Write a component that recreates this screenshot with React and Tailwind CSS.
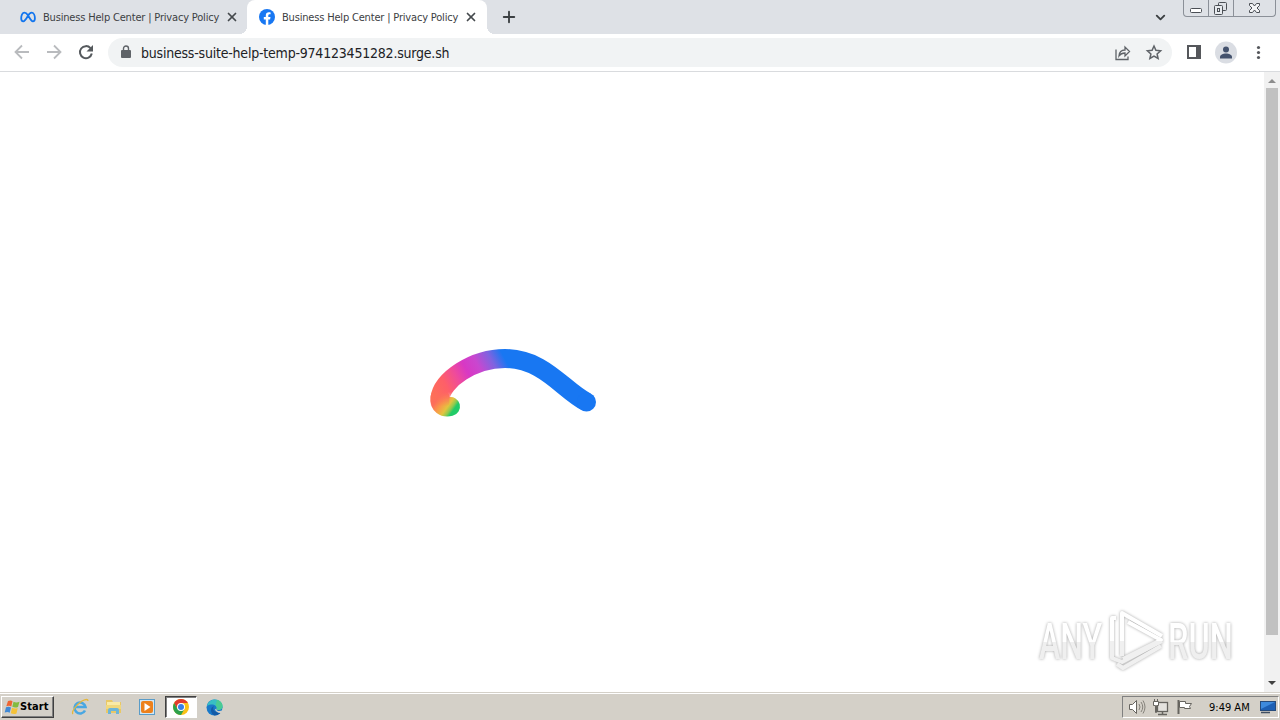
import { ChevronDown, Plus, X } from "lucide-react";

const TABS = [
  { id: 1, title: "Business Help Center | Privacy Policy", icon: "meta" },
  { id: 2, title: "Business Help Center | Privacy Policy", icon: "facebook" },
];

function MetaIcon() {
  return (
    <svg width="16" height="16" viewBox="0 0 16 16" fill="none">
      <path
        d="M8 6.2C6.7 4.3 5.5 3.6 4.4 3.6 2.4 3.6 1.2 6.5 1.2 9.2c0 2 .8 3.1 2.1 3.1 1.5 0 2.5-1.7 4.7-5.6 1.1-2 2.2-3.1 3.6-3.1 2 0 3.3 2.8 3.3 5.6 0 2-.7 3.1-2 3.1-1.5 0-2.4-1.5-4.9-6.1Z"
        stroke="#1275ee"
        strokeWidth="1.8"
      />
    </svg>
  );
}

function FacebookIcon() {
  return (
    <svg width="16" height="16" viewBox="0 0 16 16">
      <circle cx="8" cy="8" r="8" fill="#1877f2" />
      <path
        d="M6.8 16v-5.6H4.8V8.1h2V6.4c0-2 1.2-3.2 3-3.2.9 0 1.8.2 1.8.2v1.9h-1c-1 0-1.3.6-1.3 1.3v1.5h2.2l-.4 2.3H9.3V16Z"
        fill="#fff"
      />
    </svg>
  );
}

function Tab({ tab, active }) {
  return (
    <div
      className={
        active
          ? "relative flex h-[34px] w-[240px] items-center rounded-t-lg bg-white pl-3"
          : "flex h-[34px] w-[247px] items-center pl-5"
      }
    >
      {active && (
        <>
          <span className="absolute bottom-0 -left-2 size-2 bg-[radial-gradient(circle_at_0_0,transparent_8px,#fff_8px)]" />
          <span className="absolute -right-2 bottom-0 size-2 bg-[radial-gradient(circle_at_100%_0,transparent_8px,#fff_8px)]" />
        </>
      )}
      {tab.icon === "meta" ? <MetaIcon /> : <FacebookIcon />}
      <span className="ml-[7px] w-[182px] pt-[2px] whitespace-nowrap font-['DejaVu_Sans_Condensed','DejaVu_Sans',sans-serif] text-[11px] tracking-[-0.18px] text-[#3c4043]">
        {tab.title}
      </span>
      <X size={14} strokeWidth={3} className="text-[#45494d]" />
    </div>
  );
}

function WindowControls() {
  return (
    <div className="flex h-[17px] w-[93px] self-start rounded-b-[4px] border border-t-0 border-[#8b9098] text-[#4b4f55]">
      <div className="w-[25px] border-r border-[#8b9098]">
        <svg width="24" height="16" fill="none" stroke="currentColor">
          <rect x="6.5" y="8.5" width="11" height="4" rx="1" fill="#fff" />
        </svg>
      </div>
      <div className="w-[25px] border-r border-[#8b9098]">
        <svg width="24" height="16" fill="none" stroke="currentColor">
          <rect x="9.5" y="2.5" width="8" height="8" rx="1" />
          <rect x="5.5" y="5.5" width="8" height="9" rx="1" fill="#e7eaee" />
          <rect x="8.5" y="8.5" width="2" height="3" />
        </svg>
      </div>
      <svg width="41" height="16" fill="none" stroke="currentColor">
        <path d="M15.5 3.5h3l2 2.5 2-2.5h3v2l-2.5 2.5 2.5 2.5v2h-3l-2-2.5-2 2.5h-3v-2l2.5-2.5-2.5-2.5Z" fill="#f3f4f6" />
      </svg>
    </div>
  );
}

function TabStrip() {
  return (
    <div className="flex h-[34px] items-center bg-[#dee1e6]">
      {TABS.map((tab) => (
        <Tab key={tab.id} tab={tab} active={tab.id === 2} />
      ))}
      <Plus size={18} strokeWidth={2.5} className="ml-[13px] text-[#3c4043]" />
      <ChevronDown size={15} strokeWidth={3} className="mr-[15px] ml-auto text-[#3c4043]" />
      <WindowControls />
      <div className="w-1" />
    </div>
  );
}

function Toolbar() {
  return (
    <div className="flex h-[38px] items-center border-b border-[#d9dbde] bg-white">
      <svg width="108" height="37" fill="none" strokeWidth="1.8">
        <g stroke="#b9bbbe">
          <path d="M29 18H16M22 11.5 15.5 18l6.5 6.5" />
          <path d="M47 18h13M54 11.5l6.5 6.5-6.5 6.5" />
        </g>
        <path d="M90.5 14.2a6 6 0 1 0 1.3 5.3" stroke="#55595d" strokeWidth="2" />
        <path d="M93 11v6.5h-6.5Z" fill="#55595d" />
      </svg>
      <div className="flex h-[29px] w-[1064px] items-center rounded-full bg-[#f1f3f4] pr-[9px] pl-[13px]">
        <svg className="mb-px" width="10" height="14" fill="none">
          <rect y="5" width="10" height="8" rx="1" fill="#5f6368" />
          <path d="M2.5 5V3.5a2.5 2.5 0 0 1 5 0V5" stroke="#5f6368" strokeWidth="1.4" />
        </svg>
        <span className="ml-[10px] pt-[2px] whitespace-nowrap font-['DejaVu_Sans_Condensed','DejaVu_Sans',sans-serif] text-[14px] tracking-[-0.21px] text-[#202124]">
          business-suite-help-temp-974123451282.surge.sh
        </span>
        <svg className="ml-auto" width="50" height="18" fill="none" stroke="#5f6368" strokeWidth="1.3">
          <path d="M3 5.5v10h12v-3" />
          <path d="M6 12c.3-4 2.500-6 6-6V3l4.500 4.500-4.500 4.500V9c-3 0-4.500.8-6 3Z" />
          <path d="m41 2 1.900 4.300 4.700.5-3.500 3.100 1 4.600-4.100-2.400-4.100 2.400 1-4.600-3.500-3.100 4.700-.5Z" strokeWidth="1.500" />
        </svg>
      </div>
      <svg className="ml-[14px]" width="94" height="24">
        <path d="M1 4h14v14H1Zm2 2v10h7V6Z" fill="#55575b" fillRule="evenodd" />
        <circle cx="40" cy="11.500" r="11" fill="#dadde3" />
        <circle cx="40" cy="8.500" r="3" fill="#44526d" />
        <path d="M34 17.500V16c0-2 3-3.500 6-3.500s6 1.500 6 3.500v1.500Z" fill="#44526d" />
        <g fill="#55575b">
          <circle cx="72.500" cy="6.500" r="1.600" />
          <circle cx="72.500" cy="11.500" r="1.600" />
          <circle cx="72.500" cy="16.500" r="1.600" />
        </g>
      </svg>
    </div>
  );
}

// rainbow stroke of the loading animation
function Loader() {
  return (
    <svg width="170" height="72" viewBox="428 346 170 72" fill="none" strokeWidth="19">
      <defs>
        <linearGradient id="hook" gradientUnits="userSpaceOnUse" x1="436" y1="397" x2="454" y2="410">
          <stop offset=".1" stopColor="#fd6e5b" />
          <stop offset=".4" stopColor="#f99a48" />
          <stop offset=".68" stopColor="#e3c43f" />
          <stop offset=".85" stopColor="#8fca50" />
          <stop offset=".98" stopColor="#22cb67" />
        </linearGradient>
        <linearGradient id="arc" gradientUnits="userSpaceOnUse" x1="436" y1="402" x2="510" y2="363">
          <stop offset="0" stopColor="#fd7057" />
          <stop offset=".2" stopColor="#fe5f69" />
          <stop offset=".36" stopColor="#ef4b9b" />
          <stop offset=".5" stopColor="#d838c4" />
          <stop offset=".65" stopColor="#c947cf" />
          <stop offset=".82" stopColor="#8063e0" />
          <stop offset=".97" stopColor="#1877f2" />
        </linearGradient>
        {/* fades the lower end of the arc into the hook */}
        <linearGradient id="fade" gradientUnits="userSpaceOnUse" x1="0" y1="392" x2="0" y2="406">
          <stop offset="0" stopColor="#fff" />
          <stop offset="1" stopColor="#000" />
        </linearGradient>
        <mask id="arcMask" maskUnits="userSpaceOnUse" x="428" y="346" width="170" height="72">
          <rect x="428" y="346" width="30" height="72" fill="url(#fade)" stroke="none" />
          <rect x="457" y="346" width="141" height="72" fill="#fff" stroke="none" />
        </mask>
      </defs>
      <path d="M450.500 406.500C444 408 439 405 440 397.500" stroke="url(#hook)" strokeLinecap="round" />
      <path
        d="M439.700 406L439.900 398.500C442 380 473 358.500 505 358.500C544 358.500 564 391 586.500 402"
        stroke="url(#arc)"
        mask="url(#arcMask)"
      />
      <circle cx="586.500" cy="402" r="9.500" fill="#1877f2" />
    </svg>
  );
}

function Watermark() {
  return (
    <svg
      className="drop-shadow-[0_0_1.500px_rgba(0,0,0,0.35)]"
      width="204"
      height="68"
      viewBox="1034 606 204 68"
    >
      <defs>
        <linearGradient id="mark" gradientUnits="userSpaceOnUse" x1="0" y1="610" x2="0" y2="670">
          <stop offset=".52" stopColor="#fff" />
          <stop offset=".52" stopColor="#f0f0f0" />
        </linearGradient>
        <linearGradient id="letters" gradientUnits="userSpaceOnUse" x1="0" y1="-36" x2="0" y2="0">
          <stop offset=".52" stopColor="#fff" />
          <stop offset=".52" stopColor="#efefef" />
        </linearGradient>
      </defs>
      <g fill="url(#letters)" fontFamily="Roboto, sans-serif" fontSize="50" fontWeight="500">
        <text transform="translate(1039 659) scale(.64 1)">ANY</text>
        <text transform="translate(1168 659) scale(.65 1)">RUN</text>
      </g>
      <g fill="none" stroke="url(#mark)" strokeWidth="4" strokeLinejoin="round">
        <path d="M1122 656v-43l40 23" />
        <path d="M1128 622l33 18-38 19" />
        <path d="M1116 618h-4v40l10 4 40-21" />
        <path d="m1117 664 6 4 38-22" />
      </g>
    </svg>
  );
}

function Scrollbar() {
  return (
    <div className="flex w-4 flex-col items-center bg-[#f1f1f1]">
      <div className="flex h-4 items-center pt-[2px]">
        <svg width="8" height="4" fill="#8d8d8d"><path d="M0 4 4 0l4 4Z" /></svg>
      </div>
      <div className="h-[547px] w-3 bg-[#c1c1c1]" />
      <div className="mt-auto flex h-[17px] items-center pb-[2px]">
        <svg width="8" height="4" fill="#404040"><path d="M0 0h8L4 4Z" /></svg>
      </div>
    </div>
  );
}

function WindowsFlag() {
  return (
    <svg width="16" height="16">
      <path d="M4 2c2-1 3.500-.7 4.500.2L7.300 7.500c-1.500-1-3-1.100-5-.2Z" fill="#ee6532" />
      <path d="M9.500 2.700c2 .9 3.500 1 6 0L14 8c-2 .8-3.700.8-5.700-.2Z" fill="#83bb40" />
      <path d="M2 8.300c2-.9 3.500-.7 5 .2L5.700 13.800c-1.500-1-3-1.100-5-.2Z" fill="#4189d5" />
      <path d="M8 8.800c2 .9 3.700 1 5.700.2L12.500 14.500c-2 .8-3.700.6-5.700-.3Z" fill="#f5c238" />
    </svg>
  );
}

function QuickLaunch() {
  return (
    <div className="flex items-center">
      <svg className="mr-4" width="18" height="18" fill="none">
        <path d="M14 12.500A5.500 5.500 0 1 1 14.500 9H5" stroke="#49a7e2" strokeWidth="2.600" />
        <path d="M2 16c-2-2 3-9 9-13 4-2 6-2 6 0" stroke="#e5b73b" strokeWidth="1.300" />
      </svg>
      <svg className="mr-4" width="17" height="18">
        <path d="M1 2h6l1 2h8v11H1Z" fill="#e9c866" />
        <path d="M2 4h13v5H2Z" fill="#faeaa6" />
        <path d="M1 7h15v4H1Z" fill="#f1d87d" />
        <path d="M3 16v-4q0-2 2-2h7q2 0 2 2v4h-3v-3H6v3Z" fill="#6db5d8" />
      </svg>
      <svg className="mr-[10px]" width="17" height="18">
        <rect x="1.500" y="1.500" width="15" height="15" fill="#d2e7f5" stroke="#5a9cc8" />
        <rect x="3" y="3" width="12" height="12" rx="2" fill="#ed811c" />
        <path d="M6.500 5v8l6-4Z" fill="#fff" />
      </svg>
      <div className="flex h-[22px] w-8 items-center justify-center border border-white border-t-[#404040] border-l-[#404040] bg-white shadow-[inset_1px_1px_0_#808080]">
        <svg width="16" height="16" viewBox="0 0 16 16">
          <circle cx="8" cy="8" r="8" fill="#fbc116" />
          <path d="M1.1 4A8 8 0 0 1 14.9 4H8L4.500 10Z" fill="#e33b2e" />
          <path d="M1.1 4A8 8 0 0 0 8 16l3.500-6-7 0Z" fill="#2da14c" />
          <circle cx="8" cy="8" r="4" fill="#fff" />
          <circle cx="8" cy="8" r="3" fill="#397fe7" />
        </svg>
      </div>
      <svg className="ml-[9px]" width="17" height="17">
        <circle cx="8.500" cy="8.500" r="8" fill="#1979c9" />
        <path d="M1 7C2 2 6 .5 9 .5c5 0 8 4 7.500 7.500-.5 3-4 3.500-6 2.500 1.500-4-4-7-9.500-3.500Z" fill="#38bfc4" />
        <path d="M11 .8c4 1.200 6 4.500 5.500 7.200-.5 3-4 3.500-6 2.500 1-2 0-3-1-4Z" fill="#4acb94" />
        <path d="M8 7c-2 3 0 7 6.500 6.700A8 8 0 0 1 8.500 16.500C5 15 3 9 8 7Z" fill="#145ba7" />
        <path d="M10.500 9.500c-1 2.500 3 3.500 7 1.300l-2 3c-3 .8-6-1.300-6.500-3.300Z" fill="#d4d0c8" />
      </svg>
    </div>
  );
}

function Tray() {
  return (
    <div className="mr-[1px] ml-auto flex h-[22px] w-[157px] items-center border border-white border-t-[#808080] border-l-[#808080] pl-[5px]">
      <svg width="68" height="20" fill="none" stroke="#66645f">
        <path d="M1.500 7.500h3l4-4v13l-4-4h-3Z" fill="#fff" />
        <path d="M11 7q2 3 0 6M13 5q3.500 5 0 10M15 3.500q4 6.500 0 13" stroke="#85827b" />
        <rect x="29.500" y="5.500" width="10" height="9" fill="#e4e2de" strokeWidth="1.300" />
        <path d="M30 17.500h9M34.500 14.500v3" strokeWidth="1.500" />
        <path d="M25.500 4.500h5v4h-2v7h-1v-7h-2Z" fill="#fff" />
        <path d="M26.500 2v2.500M29.500 2v2.500" />
        <path d="M50.500 3v14" strokeWidth="2" />
        <path d="M51.500 4.500h6v2h6l-2 3 1 2h-6v-1h-5Z" fill="#fff" />
      </svg>
      <span className="ml-[13px] pt-[2px] whitespace-nowrap font-['DejaVu_Sans_Condensed','DejaVu_Sans',sans-serif] text-[11px] tracking-[0px] text-black">
        9:49 AM
      </span>
      <svg className="mr-[2px] ml-auto" width="16" height="14">
        <rect x=".5" y="1.500" width="15" height="9" fill="#1c5fb4" stroke="#264b7b" />
        <path d="M1 2h14L1 9Z" fill="#3d8add" />
        <path d="M1 12.500h9" stroke="#414f61" strokeWidth="1.500" />
      </svg>
    </div>
  );
}

function Taskbar() {
  return (
    <div className="flex h-7 items-center border-t border-[#d4d0c8] bg-[#d4d0c8] pt-px shadow-[inset_0_1px_0_#fff]">
      <div className="mr-[17px] ml-[1px] flex h-[22px] w-[53px] items-center border border-white border-r-[#404040] border-b-[#404040] pl-[2px] shadow-[inset_-1px_-1px_0_#808080]">
        <WindowsFlag />
        <span className="pt-px font-['DejaVu_Sans_Condensed','DejaVu_Sans',sans-serif] text-[11px] font-bold tracking-[0.1px] text-black">
          Start
        </span>
      </div>
      <QuickLaunch />
      <Tray />
    </div>
  );
}

export default function App() {
  return (
    <div className="flex h-[720px] w-[1280px] flex-col overflow-hidden bg-white">
      <TabStrip />
      <Toolbar />
      <div className="flex min-h-0 flex-1">
        <main className="flex flex-1 flex-col justify-between">
          <div className="pt-[274px] pl-[428px]">
            <Loader />
          </div>
          <div className="mb-[18px] flex justify-end pr-[26px]">
            <Watermark />
          </div>
        </main>
        <Scrollbar />
      </div>
      <Taskbar />
    </div>
  );
}
